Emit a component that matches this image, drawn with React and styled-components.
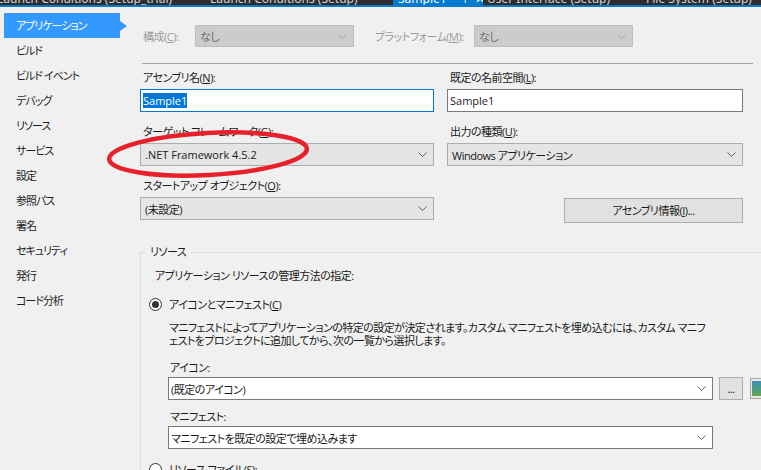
import React from 'react';
import styled, { createGlobalStyle, css } from 'styled-components';

const GlobalStyle = createGlobalStyle`
  *, *::before, *::after { box-sizing: border-box; }
  html, body { margin: 0; padding: 0; background: #f0f0f0; }
  body {
    font-family: "Open Sans", "Noto Sans CJK JP", sans-serif;
    font-size: 11px;
    letter-spacing: -0.5px;
    color: #1a1a1a;
    font-feature-settings: "palt";
  }
  u { text-underline-offset: 1px; }
`;

const Page = styled.div`
  position: relative;
  width: 761px;
  height: 470px;
  overflow: hidden;
  background: #f0f0f0;
`;

/* ---------- document tab strip ---------- */
const TabStrip = styled.div`
  display: flex;
  height: 7px;
  overflow: hidden;
  background: #2d2d30;
  border-bottom: 2px solid #007acc;
`;

const DocTab = styled.div`
  flex: none;
  width: ${p => p.$w}px;
  margin-left: ${p => p.$ml || 0}px;
  padding-left: ${p => p.$pl || 0}px;
  height: 5px;
  overflow: hidden;
  white-space: nowrap;
  background: ${p => (p.$active ? '#007acc' : 'transparent')};
  color: ${p => (p.$active ? '#ffffff' : '#d0d0d0')};
  font-family: "Noto Sans", sans-serif;
  font-size: 12px;
  letter-spacing: 0;
  line-height: 16px;
`;

const TabText = styled.div`
  display: flex;
  gap: ${p => p.$gap || 0}px;
  margin-top: -9px;
`;

/* ---------- body ---------- */
const Body = styled.div`
  display: flex;
`;

const Nav = styled.nav`
  flex: none;
  width: 140px;
  padding-top: 6px;
  display: flex;
  flex-direction: column;
`;

const NavItem = styled.div`
  position: relative;
  margin-left: 4px;
  width: 116px;
  height: 25px;
  line-height: 25px;
  padding-left: 12px;
  color: #1e1e1e;
  letter-spacing: -1px;
  ${p =>
    p.$active &&
    css`
      background: #3399ff;
      color: #ffffff;
      &::after {
        content: '';
        position: absolute;
        right: -7px;
        top: 8px;
        border-left: 7px solid #3399ff;
        border-top: 5px solid transparent;
        border-bottom: 5px solid transparent;
      }
    `}
`;

const Main = styled.main`
  flex: 1;
  min-width: 0;
  padding-top: 18px;
`;

const ConfigRow = styled.div`
  display: flex;
  align-items: center;
  padding-left: 3px;
`;

const DimLabel = styled.span`
  flex: none;
  width: ${p => p.$w}px;
  color: #9a9a9a;
  white-space: nowrap;
`;

const Latin = styled.span`
  letter-spacing: 0;
`;

const comboVariants = {
  disabled: css`
    background: #cccccc;
    border-color: #bfbfbf;
    color: #6d6d6d;
  `,
  gray: css`
    background: #e5e5e5;
    border-color: #adadad;
    color: #1a1a1a;
  `,
  white: css`
    background: #ffffff;
    border-color: #7a7a7a;
    color: #1a1a1a;
  `,
};

const Combo = styled.div`
  flex: none;
  display: flex;
  align-items: center;
  justify-content: space-between;
  width: ${p => (p.$w ? `${p.$w}px` : 'auto')};
  height: ${p => p.$h || 23}px;
  margin-right: ${p => p.$mr || 0}px;
  padding: 0 6px 0 ${p => p.$pl ?? 4}px;
  border: 1px solid;
  white-space: nowrap;
  ${p => comboVariants[p.$variant || 'gray']}
`;

const ChevronSvg = styled.svg`
  flex: none;
  width: 9px;
  height: 5px;
  overflow: visible;
`;

const Chevron = ({ color = '#606060' }) => (
  <ChevronSvg viewBox="0 0 9 5">
    <path d="M0.5 0.5 L4.5 4.5 L8.5 0.5" fill="none" stroke={color} strokeWidth="1" />
  </ChevronSvg>
);

const Rule = styled.div`
  height: 1px;
  margin: 16px 8px 0 2px;
  background: #a0a0a0;
`;

const FieldGrid = styled.div`
  display: grid;
  grid-template-columns: 294px 296px;
  column-gap: 13px;
  row-gap: 12px;
  padding-top: 6px;
`;

const Field = styled.div`
  display: flex;
  flex-direction: column;
`;

const FieldLabel = styled.label`
  display: block;
  line-height: 16px;
  margin-bottom: ${p => p.$mb ?? 3}px;
  padding-left: ${p => p.$pl ?? 3}px;
  white-space: nowrap;
`;

const TextBox = styled.div`
  display: flex;
  align-items: center;
  height: 23px;
  padding-left: 2px;
  background: #ffffff;
  border: 1px solid ${p => (p.$focused ? '#0078d7' : '#7a7a7a')};
  letter-spacing: 0;
`;

const Selection = styled.span`
  background: #0078d7;
  color: #ffffff;
  line-height: 15px;
`;

const PushButton = styled.button`
  flex: none;
  justify-self: end;
  align-self: start;
  margin-top: ${p => p.$mt || 0}px;
  margin-left: ${p => p.$ml || 0}px;
  width: ${p => p.$w}px;
  height: ${p => p.$h}px;
  padding: 0;
  background: #e1e1e1;
  border: 1px solid #adadad;
  font: inherit;
  letter-spacing: inherit;
  color: #1a1a1a;
  line-height: 1;
`;

const GroupBox = styled.fieldset`
  margin: 21px 0 0 0;
  padding: 8px 0 0 4px;
  min-width: 0;
  border: 1px solid #dcdcdc;
  border-right: none;
  border-bottom: none;
`;

const GroupLegend = styled.legend`
  padding: 0 5px;
  line-height: 16px;
`;

const Intro = styled.div`
  line-height: 16px;
  padding-left: 10px;
`;

const RadioRow = styled.div`
  display: flex;
  align-items: center;
  height: 16px;
  margin-top: 12px;
  margin-left: 4px;
  white-space: nowrap;
`;

const RadioCircle = styled.span`
  flex: none;
  display: flex;
  align-items: center;
  justify-content: center;
  width: 13px;
  height: 13px;
  margin-right: 7px;
  border-radius: 50%;
  border: 1px solid #333333;
  background: #ffffff;
  &::after {
    content: '';
    display: ${p => (p.$checked ? 'block' : 'none')};
    width: 7px;
    height: 7px;
    border-radius: 50%;
    background: #333333;
  }
`;

const Indented = styled.div`
  margin-left: 23px;
`;

const Description = styled.div`
  margin-top: 9px;
  padding-left: 1px;
  line-height: 13px;
  white-space: nowrap;
  letter-spacing: -0.55px;
`;

const SubLabel = styled(FieldLabel)`
  margin-top: ${p => p.$mt}px;
`;

const ControlRow = styled.div`
  display: flex;
  align-items: flex-start;
`;

const PreviewSvg = styled.svg`
  flex: none;
  width: 22px;
  height: 21px;
  margin-left: 7px;
  margin-top: 1px;
`;

const IconPreview = () => (
  <PreviewSvg viewBox="0 0 22 21">
    <defs>
      <linearGradient id="pv" x1="0" y1="0" x2="0" y2="1">
        <stop offset="0" stopColor="#3f8fb0" />
        <stop offset="0.55" stopColor="#4a9a86" />
        <stop offset="1" stopColor="#6aa64a" />
      </linearGradient>
    </defs>
    <rect x="0.5" y="0.5" width="21" height="20" fill="#e8e8e8" stroke="#a8a8a8" />
    <rect x="2" y="3" width="18" height="15" fill="url(#pv)" />
  </PreviewSvg>
);

const EllipseSvg = styled.svg`
  position: absolute;
  left: 100px;
  top: 124px;
  width: 216px;
  height: 60px;
  pointer-events: none;
`;

const navItems = [
  'アプリケーション',
  'ビルド',
  'ビルド イベント',
  'デバッグ',
  'リソース',
  'サービス',
  '設定',
  '参照パス',
  '署名',
  'セキュリティ',
  '発行',
  'コード分析',
];

export default function App() {
  return (
    <Page>
      <GlobalStyle />
      <TabStrip>
        <DocTab $w={213} $ml={-3}>
          <TabText>Launch Conditions (Setup_trial)</TabText>
        </DocTab>
        <DocTab $w={183}>
          <TabText>Launch Conditions (Setup)</TabText>
        </DocTab>
        <DocTab $w={90} $pl={5} $active>
          <TabText $gap={9}>
            <span>Sample1</span>
            <span>⊣</span>
            <span>✕</span>
          </TabText>
        </DocTab>
        <DocTab $w={163} $pl={4}>
          <TabText>User Interface (Setup)</TabText>
        </DocTab>
        <DocTab $w={120}>
          <TabText>File System (Setup)</TabText>
        </DocTab>
      </TabStrip>

      <Body>
        <Nav>
          {navItems.map((item, i) => (
            <NavItem key={item} $active={i === 0}>
              {item}
            </NavItem>
          ))}
        </Nav>

        <Main>
          <ConfigRow>
            <DimLabel $w={52}>
              構成(<u>C</u>):
            </DimLabel>
            <Combo $variant="disabled" $w={159} $h={22} $mr={21}>
              <span>なし</span>
              <Chevron color="#a8a8a8" />
            </Combo>
            <DimLabel $w={99}>
              プラットフォーム(<u>M</u>):
            </DimLabel>
            <Combo $variant="disabled" $w={159} $h={22}>
              <span>なし</span>
              <Chevron color="#a8a8a8" />
            </Combo>
          </ConfigRow>

          <Rule />

          <FieldGrid>
            <Field>
              <FieldLabel>
                アセンブリ名(<u>N</u>):
              </FieldLabel>
              <TextBox $focused>
                <Selection>Sample1</Selection>
              </TextBox>
            </Field>
            <Field>
              <FieldLabel>
                既定の名前空間(<u>L</u>):
              </FieldLabel>
              <TextBox>Sample1</TextBox>
            </Field>

            <Field>
              <FieldLabel>
                ターゲット フレームワーク(<u>G</u>):
              </FieldLabel>
              <Combo>
                <Latin>.NET Framework 4.5.2</Latin>
                <Chevron />
              </Combo>
            </Field>
            <Field>
              <FieldLabel>
                出力の種類(<u>U</u>):
              </FieldLabel>
              <Combo>
                <span>Windows アプリケーション</span>
                <Chevron />
              </Combo>
            </Field>

            <Field>
              <FieldLabel>
                スタートアップ オブジェクト(<u>O</u>):
              </FieldLabel>
              <Combo>
                <span>(未設定)</span>
                <Chevron />
              </Combo>
            </Field>
            <PushButton $w={179} $h={25} $mt={20}>
              アセンブリ情報(<u>I</u>)...
            </PushButton>
          </FieldGrid>

          <GroupBox>
            <GroupLegend>リソース</GroupLegend>
            <Intro>アプリケーション リソースの管理方法の指定:</Intro>
            <RadioRow>
              <RadioCircle $checked />
              <span>
                アイコンとマニフェスト(<u>C</u>)
              </span>
            </RadioRow>
            <Indented>
              <Description>
                <div>
                  マニフェストによってアプリケーションの特定の設定が決定されます。カスタム マニフェストを埋め込むには、カスタム マニフ
                </div>
                <div>ェストをプロジェクトに追加してから、次の一覧から選択します。</div>
              </Description>

              <SubLabel $mt={13} $mb={1} $pl={2}>
                アイコン:
              </SubLabel>
              <ControlRow>
                <Combo $variant="white" $w={545} $pl={2}>
                  <span>(既定のアイコン)</span>
                  <Chevron />
                </Combo>
                <PushButton $w={24} $h={23} $ml={6}>
                  ...
                </PushButton>
                <IconPreview />
              </ControlRow>

              <SubLabel $mt={9} $mb={1} $pl={2}>
                マニフェスト:
              </SubLabel>
              <Combo $variant="white" $w={545} $pl={2}>
                <span>マニフェストを既定の設定で埋め込みます</span>
                <Chevron />
              </Combo>
            </Indented>
            <RadioRow>
              <RadioCircle />
              <span>
                リソース ファイル(<u>S</u>):
              </span>
            </RadioRow>
          </GroupBox>
        </Main>
      </Body>

      <EllipseSvg viewBox="0 0 216 60">
        <ellipse
          cx="108"
          cy="30"
          rx="99"
          ry="21"
          fill="none"
          stroke="#e8202a"
          strokeWidth="4.5"
          transform="rotate(-3 108 30)"
        />
      </EllipseSvg>
    </Page>
  );
}
